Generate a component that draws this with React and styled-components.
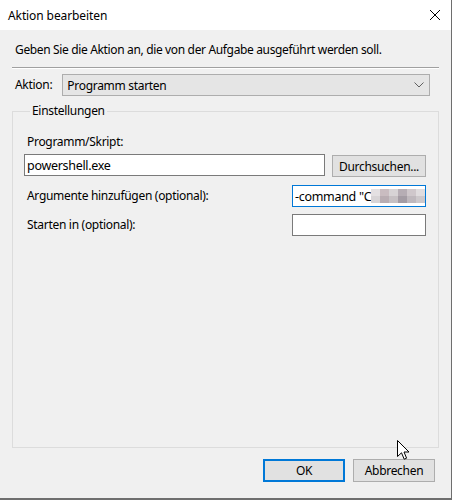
import styled, { createGlobalStyle } from "styled-components";

const GlobalStyle = createGlobalStyle`
  html, body {
    margin: 0;
    padding: 0;
    background: #ffffff;
  }
  body {
    font-family: "Noto Sans", "Liberation Sans", sans-serif;
    font-size: 12px;
    color: #000;
  }
`;

const Window = styled.div`
  position: relative;
  width: 451px;
  height: 498px;
  background: #f0f0f0;
  border-right: 1px solid #6e6e6e;
  border-bottom: 2px solid #6e6e6e;
  display: flex;
  flex-direction: column;
  overflow: hidden;
`;

const TitleBar = styled.div`
  height: 30px;
  background: #fff;
  display: flex;
  align-items: center;
  justify-content: space-between;
  padding: 0 10px 0 8px;
`;

const Title = styled.span`
  font-size: 12px;
  letter-spacing: -0.1px;
`;

const Body = styled.div`
  flex: 1;
  display: flex;
  flex-direction: column;
  padding: 12px 12px 0 12px;
`;

const Instruction = styled.p`
  margin: 0 0 0 3px;
  line-height: 16px;
  letter-spacing: -0.35px;
`;

const Separator = styled.div`
  margin-top: 9px;
  height: 0;
  border-top: 1px solid #a0a0a0;
  border-bottom: 1px solid #ffffff;
`;

const ActionRow = styled.div`
  display: flex;
  align-items: center;
  margin: 5px 9px 0 3px;
  gap: 10px;
`;

const Label = styled.label`
  line-height: 16px;
  letter-spacing: -0.3px;
  white-space: nowrap;
`;

const Select = styled.div`
  flex: 1;
  height: 20px;
  background: #e5e5e5;
  border: 1px solid #adadad;
  display: flex;
  align-items: center;
  justify-content: space-between;
  padding: 0 5px 0 4px;
  letter-spacing: -0.3px;
`;

const GroupBox = styled.fieldset`
  margin: 8px 0 0 0;
  height: 344px;
  box-sizing: border-box;
  border: 1px solid #dcdcdc;
  padding: 10px 12px 0 11px;
  display: flex;
  flex-direction: column;
`;

const Legend = styled.legend`
  margin-left: 6px;
  padding: 0 2px;
  line-height: 14px;
  letter-spacing: -0.3px;
`;

const FieldLabel = styled(Label)`
  display: block;
  margin: 6px 0 3px 3px;
`;

const Row = styled.div`
  display: flex;
  align-items: center;
  justify-content: space-between;
  margin-top: ${({ $gap }) => $gap || 0}px;
`;

const RowLabel = styled(Label)`
  margin-left: 3px;
`;

const TextBox = styled.div`
  position: relative;
  width: ${({ $w }) => $w}px;
  height: 20px;
  box-sizing: content-box;
  background: #fff;
  border: 1px solid ${({ $focus }) => ($focus ? "#0078d7" : "#7a7a7a")};
  display: flex;
  align-items: center;
  padding: 0 2px;
  overflow: hidden;
  white-space: nowrap;
  letter-spacing: -0.3px;
  font-size: 12.5px;
`;

const Button = styled.button`
  width: ${({ $w }) => $w}px;
  height: ${({ $h }) => $h || 23}px;
  box-sizing: border-box;
  background: #e1e1e1;
  border: ${({ $default }) =>
    $default ? "2px solid #0078d7" : "1px solid #adadad"};
  font-family: inherit;
  font-size: 12px;
  letter-spacing: -0.3px;
  color: #000;
  padding: 0;
`;

const BrowseButton = styled(Button)`
  margin-top: 2px;
`;

const Footer = styled.div`
  display: flex;
  justify-content: flex-end;
  gap: 8px;
  margin: 11px 4px 0 0;
`;

const Mosaic = styled.svg`
  display: block;
  flex-shrink: 0;
`;

const Cursor = styled.svg`
  position: absolute;
  left: 397px;
  top: 440px;
`;

const blocks = [
  ["#e4e0e2", "#c9bcc0", "#d7d3d5", "#b6adb4", "#cfc7cb", "#e0dcde", "#c2bcc1", "#d9d5d7", "#e6e3e4", "#cfcbcd"],
  ["#d8d4d6", "#b9adb2", "#c6c0c3", "#a49ca4", "#bfb8bd", "#cdc8cb", "#b3adb3", "#d1cdcf", "#dad7d8", "#c4c0c2"],
];

const App = () => {
  return (
    <>
      <GlobalStyle />
      <Window>
        <TitleBar>
          <Title>Aktion bearbeiten</Title>
          <svg width="12" height="12" viewBox="0 0 12 12">
            <path d="M1 1 L11 11 M11 1 L1 11" stroke="#000" strokeWidth="1" />
          </svg>
        </TitleBar>
        <Body>
          <Instruction>
            Geben Sie die Aktion an, die von der Aufgabe ausgeführt werden soll.
          </Instruction>
          <Separator />
          <ActionRow>
            <Label>Aktion:</Label>
            <Select>
              <span>Programm starten</span>
              <svg width="10" height="6" viewBox="0 0 10 6">
                <path d="M0.5 0.5 L5 5 L9.5 0.5" fill="none" stroke="#606060" strokeWidth="1" />
              </svg>
            </Select>
          </ActionRow>
          <GroupBox>
            <Legend>Einstellungen</Legend>
            <FieldLabel>Programm/Skript:</FieldLabel>
            <Row>
              <TextBox $w={295}>powershell.exe</TextBox>
              <BrowseButton $w={94} $h={22}>Durchsuchen...</BrowseButton>
            </Row>
            <Row $gap={8}>
              <RowLabel>Argumente hinzufügen (optional):</RowLabel>
              <TextBox $w={128} $focus>
                -command "C
                <Mosaic width="90" height="14" viewBox="0 0 90 14">
                  {blocks.map((row, r) =>
                    row.map((c, i) => (
                      <rect key={`${r}-${i}`} x={i * 9} y={r * 7} width="9" height="7" fill={c} />
                    ))
                  )}
                </Mosaic>
              </TextBox>
            </Row>
            <Row $gap={7}>
              <RowLabel>Starten in (optional):</RowLabel>
              <TextBox $w={128} />
            </Row>
          </GroupBox>
          <Footer>
            <Button $w={82} $default>OK</Button>
            <Button $w={82}>Abbrechen</Button>
          </Footer>
        </Body>
        <Cursor width="13" height="21" viewBox="0 0 13 21">
          <path
            d="M0.5 0.5 L0.5 16.5 L4.5 12.8 L7.2 19.2 L9.6 18.2 L7 12 L12 12 Z"
            fill="#fff"
            stroke="#000"
            strokeWidth="1"
            strokeLinejoin="miter"
          />
        </Cursor>
      </Window>
    </>
  );
};

export default App;
